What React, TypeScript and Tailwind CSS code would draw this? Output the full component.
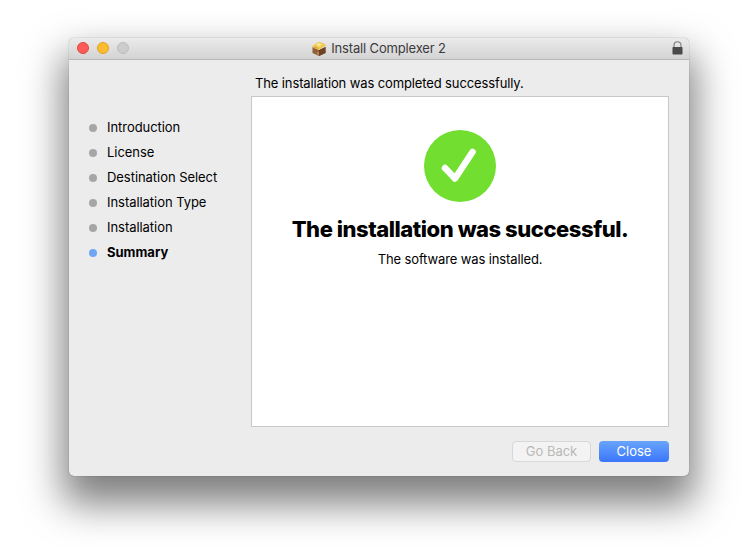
import React from 'react';

const steps = ['Introduction', 'License', 'Destination Select', 'Installation Type', 'Installation'];

const PackageIcon = () => (
  <svg viewBox="0 0 16 16" className="w-[16px] h-[16px]">
    <path d="M1.5 6 L8 9 L14.5 6 L14.5 12 L8 15 L1.5 12 Z" fill="#8f5f38" />
    <path d="M8 9 L14.5 6 L14.5 12 L8 15 Z" fill="#6d4225" />
    <path d="M1 5.5 L4 3 L8 1 L12 2 L15.5 4.5 L12 6 L8 9 L4 7.5 Z" fill="#f0c94f" />
    <path d="M5 3.5 L8 2 L11 3.5 L8 5.5 Z" fill="#fbe89a" />
    <path d="M2 6.5 L5 5.5 L8 8 L4 7.5 Z" fill="#d9a53a" />
    <path d="M6 10.5 L8 11.5 L8 14 L6 13 Z" fill="#b98a5c" />
  </svg>
);

const LockIcon = () => (
  <svg viewBox="0 0 11 14" className="w-[11px] h-[14px]">
    <path d="M2 7 V4.2 a3.5 3.5 0 0 1 7 0 V7" fill="none" stroke="#7b7a7c" strokeWidth="1.1" />
    <rect x="0.5" y="6" width="10" height="7.5" rx="0.8" fill="#4a494b" />
  </svg>
);

export default function App() {
  return (
    <div className="w-[753px] h-[547px] bg-white overflow-hidden pt-[38px] pl-[69px] [font-family:Inter,'Liberation_Sans',sans-serif] text-black">
      <div className="w-[620px] h-[438px] rounded-[5px] bg-[#ececec] flex flex-col overflow-hidden shadow-[0_0_1px_rgba(0,0,0,0.55),0_22px_38px_6px_rgba(0,0,0,0.5)]">
        {/* Title bar */}
        <div className="relative h-[22px] shrink-0 flex items-center justify-center gap-[4px] pr-[1px] bg-gradient-to-b from-[#ebebeb] to-[#d4d3d4] border-b border-[#b9b8b9]">
          <div className="absolute left-[8px] top-[4px] flex gap-[8px]">
            <span className="w-[12px] h-[12px] rounded-full bg-[#fc5b57] border border-[#e2463f]" />
            <span className="w-[12px] h-[12px] rounded-full bg-[#fdbc2e] border border-[#e0a028]" />
            <span className="w-[12px] h-[12px] rounded-full bg-[#cdcccd] border border-[#bdbcbd]" />
          </div>
          <PackageIcon />
          <span className="text-[13px] leading-none tracking-[-0.15px] text-[#3c3b3c]">Install Complexer 2</span>
          <div className="absolute right-[6px] top-[3px] flex">
            <LockIcon />
          </div>
        </div>

        {/* Body */}
        <div className="flex-1 flex pr-[20px]">
          <ul className="w-[182px] shrink-0 pt-[55px] pl-[20px] flex flex-col">
            {steps.map((s) => (
              <li key={s} className="h-[25px] flex items-center gap-[10px] text-[13px] tracking-[-0.05px]">
                <span className="w-[8px] h-[8px] rounded-full bg-[#a6a6a6]" />
                {s}
              </li>
            ))}
            <li className="h-[25px] flex items-center gap-[10px] text-[13px] font-bold">
              <span className="w-[8px] h-[8px] rounded-full bg-[#6ea6f4]" />
              Summary
            </li>
          </ul>

          <div className="flex-1 flex flex-col">
            <p className="h-[36px] pt-[14px] pl-[4px] text-[13px] leading-[18px] tracking-[-0.12px]">The installation was completed successfully.</p>
            <div className="h-[331px] bg-white border border-[#c8c8c8] flex flex-col items-center pt-[33px]">
              <svg viewBox="0 0 72 72" className="w-[72px] h-[72px]">
                <circle cx="36" cy="36" r="36" fill="#71de30" />
                <path d="M21 38 L31 48.5 L48.5 22" fill="none" stroke="#fff" strokeWidth="6.5" strokeLinecap="round" strokeLinejoin="round" />
              </svg>
              <h1 className="mt-[13px] text-[22px] leading-[28px] font-extrabold tracking-[-0.45px]">The installation was successful.</h1>
              <p className="mt-[7px] text-[13px] leading-[18px] tracking-[-0.12px]">The software was installed.</p>
            </div>
            <div className="flex justify-end gap-[8px] pt-[14px]">
              <button className="w-[79px] h-[21px] rounded-[4px] bg-[#f3f3f3] border border-[#d8d8d8] text-[13px] text-[#b9b9b9]">Go Back</button>
              <button className="w-[70px] h-[21px] rounded-[4px] bg-gradient-to-b from-[#69a4fb] to-[#3b75fa] text-[13px] text-white">Close</button>
            </div>
          </div>
        </div>
      </div>
    </div>
  );
}
